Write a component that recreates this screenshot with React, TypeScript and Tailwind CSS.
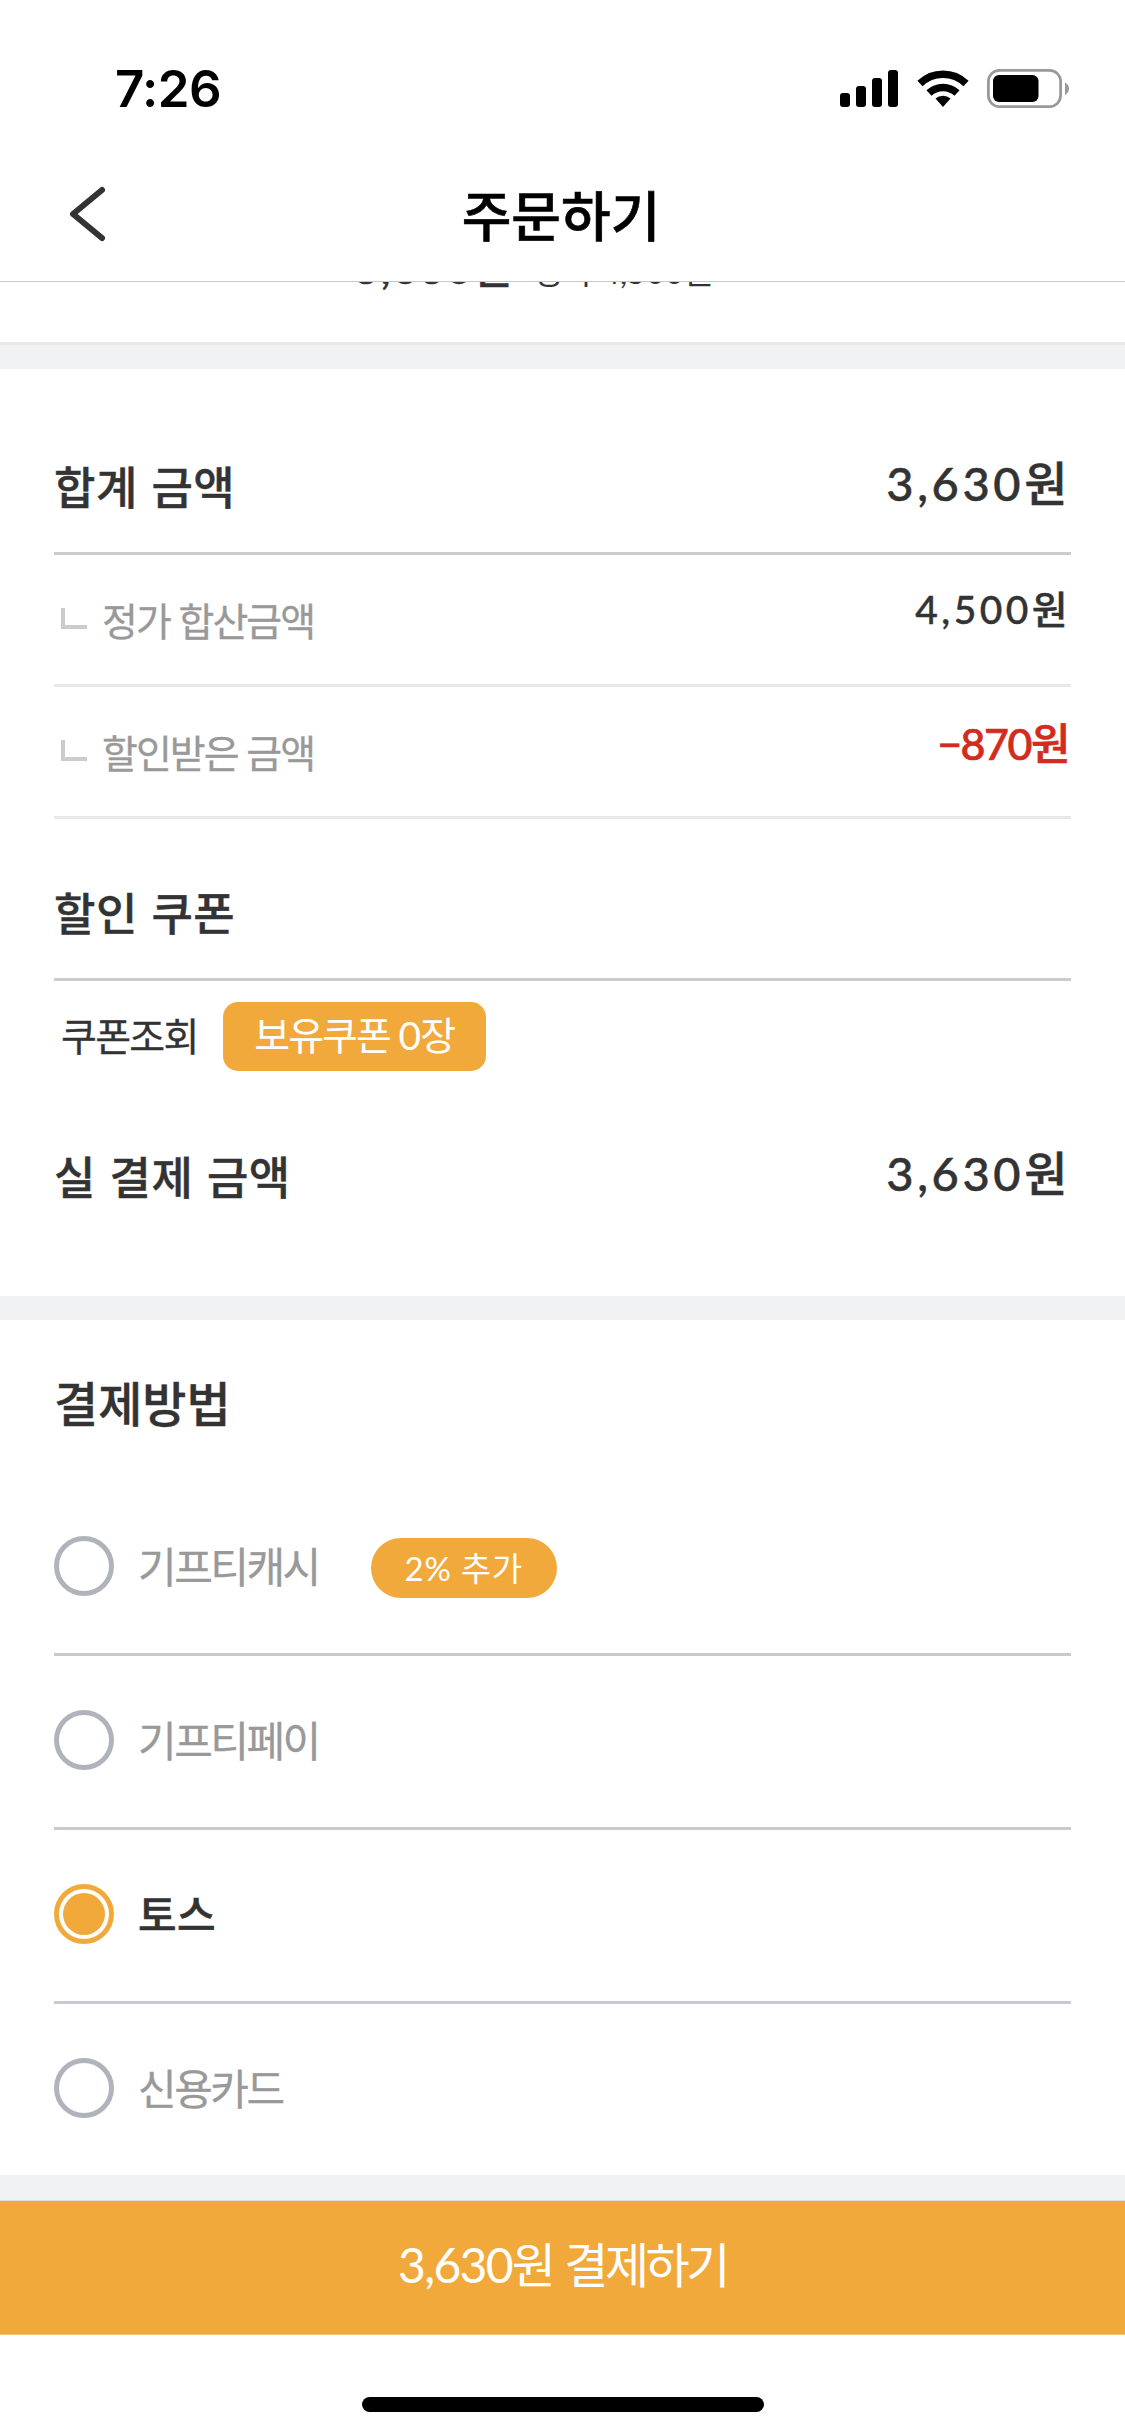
import type { ReactNode } from 'react'
import clsx from 'clsx'

const METHODS = [
  { id: 'cash', label: '기프티캐시', badge: '2% 추가' },
  { id: 'pay', label: '기프티페이' },
  { id: 'toss', label: '토스' },
  { id: 'card', label: '신용카드' },
]

const SELECTED = 'toss'

function StatusBar() {
  return (
    <div className="flex h-[145px] items-start justify-between pl-[115px] pr-[54px] pt-[60px]">
      <span className="-mt-px font-['Inter'] text-[51px] font-semibold leading-[60px] tracking-[-0.6px]">
        7:26
      </span>
      <svg width="231" height="60" viewBox="0 0 231 60">
        {/* Signal */}
        <rect x="0" y="33" width="10" height="14" rx="3" />
        <rect x="16" y="26" width="10" height="21" rx="3" />
        <rect x="32" y="18" width="10" height="29" rx="3" />
        <rect x="48" y="10" width="10" height="37" rx="3" />
        {/* Wifi */}
        <g fill="none" stroke="#000" strokeWidth="7.5">
          <path d="M80 23.500a33 33 0 0 1 46 0" />
          <path d="M89 33a20.500 20.500 0 0 1 28 0" />
        </g>
        <path d="M95.500 38.500a11.500 11.500 0 0 1 15 0L103 47z" />
        {/* Battery */}
        <rect x="148.400" y="10.400" width="72.200" height="36.200" rx="11" fill="none" stroke="#999" strokeWidth="2.800" />
        <rect x="153" y="15" width="45.500" height="27" rx="6" />
        <path d="M225 22.500q4 2 4 6t-4 6.500z" fill="#999" />
      </svg>
    </div>
  )
}

function Header() {
  return (
    <header className="relative flex h-[137px] items-center justify-center border-b border-[#c8c8c8]">
      <svg width="40" height="58" viewBox="0 0 40 58" className="absolute left-[68px] top-[40px]">
        <path d="M34 5 5 29l29 24" fill="none" stroke="#333" strokeWidth="6" strokeLinecap="round" strokeLinejoin="round" />
      </svg>
      <h1 className="mt-[2px] pr-[3px] text-[54px] font-medium leading-[60px] [-webkit-text-stroke:0.6px]">주문하기</h1>
    </header>
  )
}

function Divider() {
  return <div className="h-[24px] bg-[#f1f2f4]" />
}

function SectionTitle({ children }: { children: ReactNode }) {
  return (
    <h2 className="text-[45px] font-medium leading-[60px] tracking-[0.5px] text-[#333] [-webkit-text-stroke:0.4px] [word-spacing:3px]">
      {children}
    </h2>
  )
}

function Total() {
  return (
    <span className="-mt-[3px] font-['Lato','Noto_Sans_CJK_KR',sans-serif] text-[47px] font-medium leading-[60px] tracking-[3.6px] text-[#333] [-webkit-text-stroke:0.5px]">
      3,630원
    </span>
  )
}

function SubLabel({ children }: { children: ReactNode }) {
  return (
    <div className="flex pl-[7px]">
      <span className="mt-[24px] h-[21px] w-[26px] border-b-4 border-l-4 border-[#ccc]" />
      <span className="ml-[15px] mt-[5px] text-[39px] leading-[60px] tracking-[-2px] text-[#999] [-webkit-text-stroke:0.3px] [word-spacing:2px]">
        {children}
      </span>
    </div>
  )
}

function Radio({ checked }: { checked: boolean }) {
  return (
    <span
      className={clsx(
        'flex size-[60px] items-center justify-center rounded-full border-[5px]',
        checked ? 'border-[#f2a93b]' : 'border-[#b0b3bb]'
      )}
    >
      {checked && <span className="size-[42px] shrink-0 rounded-full bg-[#f2a93b]" />}
    </span>
  )
}

export default function App() {
  return (
    <div className="flex h-[2436px] w-[1125px] flex-col overflow-hidden bg-white font-['Noto_Sans_CJK_KR',sans-serif] text-black">
      <StatusBar />
      <Header />

      {/* Product row, scrolled under the header */}
      <div className="flex h-[63px] items-end overflow-hidden border-b-[3px] border-[#e8e8e8] pl-[354px]">
        <div className="mb-[41px] flex items-baseline font-['Lato','Noto_Sans_CJK_KR',sans-serif] leading-[60px] text-[#333]">
          <span className="text-[42px] font-medium tracking-[2.5px] [-webkit-text-stroke:0.6px]">3,630원</span>
          <span className="ml-[18px] text-[33px] tracking-[-0.3px]">정가 4,500원</span>
        </div>
      </div>
      <Divider />

      {/* Amounts */}
      <section className="h-[927px] px-[54px]">
        <div className="flex h-[186px] items-start justify-between border-b-[3px] border-[#ccc] pt-[87px]">
          <SectionTitle>합계 금액</SectionTitle>
          <Total />
        </div>
        <div className="flex h-[132px] justify-between border-b-[3px] border-[#e8e8e8] pt-[29px]">
          <SubLabel>정가 합산금액</SubLabel>
          <span className="font-['Lato','Noto_Sans_CJK_KR',sans-serif] text-[39px] font-medium leading-[50px] tracking-[3.4px] text-[#333] [-webkit-text-stroke:0.4px]">
            4,500원
          </span>
        </div>
        <div className="flex h-[132px] justify-between border-b-[3px] border-[#e8e8e8] pr-[2px] pt-[29px]">
          <SubLabel>할인받은 금액</SubLabel>
          <span className="font-['Lato','Noto_Sans_CJK_KR',sans-serif] text-[43px] font-medium leading-[56px] tracking-[-1.5px] text-[#d32b1e] [-webkit-text-stroke:0.7px]">
            −870원
          </span>
        </div>

        <div className="h-[162px] border-b-[3px] border-[#ccc] pt-[63px]">
          <SectionTitle>할인 쿠폰</SectionTitle>
        </div>
        <div className="flex pl-[7px] pt-[21px]">
          <span className="mt-[2px] text-[39px] leading-[60px] tracking-[-1.7px] text-[#333] [-webkit-text-stroke:0.3px]">
            쿠폰조회
          </span>
          <button className="ml-[25px] h-[69px] w-[263px] rounded-[15px] bg-[#f2a93b] pb-[5px] text-[39px] leading-[60px] tracking-[-2px] text-white [word-spacing:2px]">
            보유쿠폰 <span className="font-['Lato'] tracking-[-1px]">0</span>장
          </button>
        </div>
        <div className="flex items-start justify-between pt-[75px]">
          <SectionTitle>실 결제 금액</SectionTitle>
          <Total />
        </div>
      </section>
      <Divider />

      {/* Payment methods */}
      <section className="h-[855px] px-[54px] pt-[51px]">
        <h2 className="text-[48px] font-medium leading-[60px] text-[#333] [-webkit-text-stroke:0.4px]">결제방법</h2>
        <ul className="mt-[51px]">
          {METHODS.map(({ id, label, badge }) => (
            <li
              key={id}
              className="flex h-[174px] items-center border-b-[3px] border-[#c8cad1] pb-[3px] last:border-b-transparent"
            >
              <Radio checked={id === SELECTED} />
              <span
                className={clsx(
                  '-mt-[2px] ml-[24px] text-[42px] leading-[60px]',
                  id === SELECTED
                    ? 'font-medium tracking-[0.4px] text-[#333] [-webkit-text-stroke:0.5px]'
                    : 'tracking-[-2.5px] text-[#999] [-webkit-text-stroke:0.3px]'
                )}
              >
                {label}
              </span>
              {badge && (
                <span className="ml-[52px] mt-[4px] h-[60px] w-[186px] rounded-full bg-[#f2a93b] text-center font-['Lato','Noto_Sans_CJK_KR',sans-serif] text-[33px] leading-[60px] tracking-[0.7px] text-white">
                  {badge}
                </span>
              )}
            </li>
          ))}
        </ul>
      </section>
      <div className="h-[26px] shrink-0 border-b border-[#dcdcdc] bg-[#f1f2f4]" />

      <button className="h-[134px] shrink-0 border-b border-[#f7c873] bg-[#f2a93b] pb-[6px] font-['Lato','Noto_Sans_CJK_KR',sans-serif] text-[48px] leading-[60px] tracking-[-3.5px] text-white [word-spacing:3px]">
        <span className="tracking-[-1.7px]">3,630</span>원 결제하기
      </button>
      <div className="mx-auto mt-[62px] h-[15px] w-[402px] shrink-0 rounded-full bg-black" />
    </div>
  )
}
